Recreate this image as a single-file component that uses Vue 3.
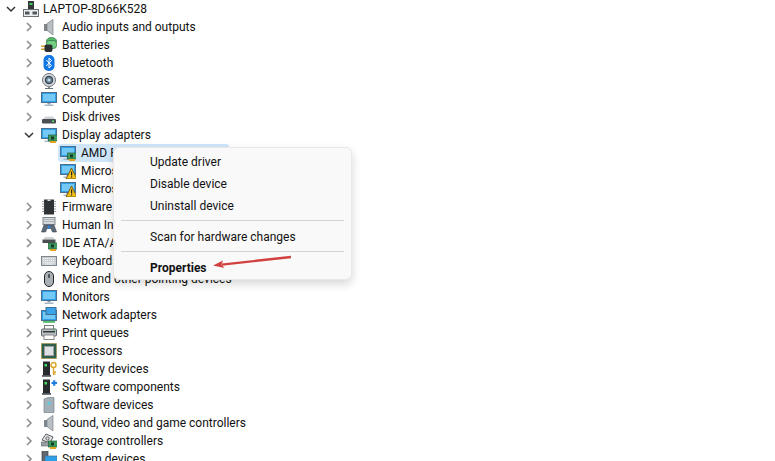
<script setup>
const screen = (x = 0, y = 0) => `<g transform="translate(${x} ${y})"><rect x="0.5" y="1.5" width="15" height="10" fill="#2f9fe8" stroke="#4a6f8f"/><rect x="2" y="3" width="12" height="7" fill="#74c8f6"/><rect x="6.5" y="12" width="3" height="1.5" fill="#8aa0b0"/><rect x="3.5" y="13.5" width="9" height="1.5" fill="#a9bac6"/></g>`
const card = `<rect x="7.5" y="8" width="9" height="6" fill="#3f9a5f" stroke="#1f5f3a" stroke-width=".7"/><rect x="10" y="9.5" width="3" height="3" fill="#143c28"/><rect x="9" y="14" width="6" height="2" fill="#e2a41f"/>`
const warn = `<path d="M11.5 5 L17 16 H6 Z" fill="#f5c21b" stroke="#6e4f08" stroke-width=".9" stroke-linejoin="round"/><rect x="11" y="8.5" width="1.2" height="4" fill="#222"/><rect x="11" y="13.3" width="1.2" height="1.2" fill="#222"/>`
const speaker = `<rect x="3" y="5" width="4" height="7" fill="#7f868a"/><path d="M6 4.5 L12 0.5 V16 L6 11.5 Z" fill="#b9bfc3" stroke="#7b8286" stroke-width=".7"/>`
const tower = `<rect x="2" y="0.5" width="7" height="14" fill="#272b2e"/><rect x="3.5" y="3" width="2.5" height="2.5" fill="#3fe060"/><rect x="1" y="14" width="9" height="1.8" fill="#55595c"/>`

const icons = {
  root: `<rect x="5" y="0" width="6" height="9" fill="#33383a"/><rect x="6.5" y="2" width="3" height="2" fill="#3fd060"/><rect x="0.5" y="8.5" width="15" height="7" fill="#eceff1" stroke="#6b7074"/><rect x="2" y="10.5" width="4.5" height="3" fill="#50565a"/><rect x="9.5" y="10.5" width="4.5" height="3" fill="#50565a"/>`,
  audio: speaker,
  batteries: `<ellipse cx="10.5" cy="4" rx="5" ry="3.5" fill="#55b96a" stroke="#2a6b3a" stroke-width=".7"/><rect x="5.5" y="3.5" width="10" height="8" rx="3" fill="#72cf84" stroke="#2a6b3a" stroke-width=".7"/><rect x="0" y="8.5" width="5" height="1.4" fill="#c89a20"/><rect x="0" y="11.5" width="5" height="1.4" fill="#c89a20"/><rect x="3.5" y="7.5" width="8" height="7.5" rx="2" fill="#2c2f31"/>`,
  bluetooth: `<rect x="2.5" y="0" width="11" height="16" rx="5" fill="#1177e6"/><path d="M5.3 5 L10.5 10.5 L8 13 V3 L10.5 5.5 L5.3 11" fill="none" stroke="#fff" stroke-width="1"/>`,
  cameras: `<circle cx="8" cy="7" r="6.5" fill="#d8dcdf" stroke="#6d7377"/><circle cx="8" cy="7" r="3.8" fill="#5f7f94" stroke="#2f363b"/><circle cx="8" cy="7" r="1.6" fill="#c5dbe9"/><rect x="7" y="13.5" width="2" height="1.5" fill="#8b9195"/><rect x="4" y="15" width="8" height="1" fill="#6b7074"/>`,
  computer: screen(),
  disk: `<path d="M2.5 10 L4 7.5 H12 L13.5 10 Z" fill="#cfd3d6"/><rect x="1" y="10" width="14" height="4.5" rx="1" fill="#4a4e52"/><rect x="11" y="11.5" width="2" height="1.5" fill="#58e070"/>`,
  display: screen() + card,
  displayWarn: screen() + warn,
  firmware: `<rect x="3" y="0.5" width="10" height="15" fill="#2f3336"/><path d="M1 2.5 H15 M1 5 H15 M1 7.5 H15 M1 10 H15 M1 12.5 H15" stroke="#9aa0a4" stroke-width="1" stroke-dasharray="2.2 9.8"/><rect x="6.5" y="0.5" width="3" height="1.5" fill="#d8dcdf"/>`,
  human: `<rect x="2" y="0.5" width="12" height="7" fill="#d5d8dc" stroke="#7f868c"/><path d="M3.5 2.5 H12.5 M3.5 4.5 H12.5" stroke="#8d949a" stroke-dasharray="1 1"/><path d="M0.5 15 L3 8 H13 L15.5 15 L11.5 15 L10 11.5 H6 L4.5 15 Z" fill="#5d6a78" stroke="#3c4550" stroke-width=".6"/><circle cx="8" cy="10" r="1.6" fill="#2f82d8"/>`,
  ide: `<path d="M2.5 4.5 L4 2 H12 L13.5 4.5 Z" fill="#cfd3d6"/><rect x="1.5" y="4.5" width="13" height="3.5" fill="#4a4e52"/>` + card,
  keyboard: `<rect x="0.5" y="3.5" width="15" height="9" fill="#c9ced2" stroke="#7e858a"/><path d="M2 5.5 H14 M2 7.5 H14 M2 9.5 H14" stroke="#f4f5f6" stroke-dasharray="1.2 .8"/><rect x="4" y="10.5" width="8" height="1" fill="#eef0f1"/>`,
  mice: `<rect x="3.5" y="0.5" width="9" height="15" rx="4.5" fill="#a8afb5" stroke="#24282b" stroke-width="1"/><rect x="7.2" y="3" width="1.6" height="4" rx=".8" fill="#343a3e"/>`,
  monitors: screen(),
  network: screen(0, 2) + `<rect x="5" y="0.5" width="10" height="7" fill="#39a4ea" stroke="#3d6e92"/><rect x="2" y="14" width="12" height="1.8" fill="#55c06a"/>`,
  print: `<rect x="3.5" y="0.5" width="9" height="4" fill="#fff" stroke="#777"/><rect x="0.5" y="4" width="15" height="7" rx="1" fill="#b9c0c4" stroke="#5f666b"/><rect x="2" y="6" width="12" height="1.5" fill="#33383b"/><rect x="3" y="10" width="10" height="4.5" fill="#fff" stroke="#888"/><rect x="12" y="4.5" width="2" height="1" fill="#3fd060"/>`,
  processors: `<rect x="0.5" y="0.5" width="15" height="15" fill="#2f5f4a" stroke="#b08a2e" stroke-dasharray="1 1"/><rect x="3.5" y="3.5" width="9" height="9" fill="#dfe2e4" stroke="#9ba1a5"/>`,
  security: tower + `<circle cx="12.5" cy="4" r="2.5" fill="none" stroke="#dba52a" stroke-width="1.4"/><path d="M12.5 6.5 V14 M12.5 11 H15 M12.5 13 H14.5" stroke="#dba52a" stroke-width="1.3"/>`,
  components: tower + `<path d="M10.5 4 H16 M13.2 1.2 V6.8" stroke="#1f7fe0" stroke-width="2.2"/>`,
  softdev: `<path d="M3 2 L7 0.5 H13 V15.5 H3 Z" fill="#a4afb8" stroke="#7a858e" stroke-width=".7"/><rect x="6.5" y="5" width="3" height="2.5" fill="#56d4e6"/>`,
  sound: speaker,
  storage: `<path d="M1 7 L5 1 L12 4 L9 10 Z" fill="#e7e9ea" stroke="#565b5f"/><circle cx="6.5" cy="5.5" r="1.6" fill="none" stroke="#565b5f"/><rect x="0.5" y="9" width="9" height="4" fill="#9a9fa3" stroke="#5c6165" stroke-width=".6"/>` + card,
  system: `<rect x="1" y="0.5" width="6" height="13" fill="#62686d" stroke="#3e4347" stroke-width=".7"/><rect x="4" y="5" width="12" height="9" fill="#2f9fe8" stroke="#4a6f8f" stroke-width=".7"/>`
}

const before = [
  ['Audio inputs and outputs', 'audio'], ['Batteries', 'batteries'], ['Bluetooth', 'bluetooth'],
  ['Cameras', 'cameras'], ['Computer', 'computer'], ['Disk drives', 'disk']
]
const adapters = [
  ['AMD Radeon(TM) Graphics', 'display', true], ['Microsoft Basic Display Adapter', 'displayWarn', false],
  ['Microsoft Hybrid Adapter', 'displayWarn', false]
]
const after = [
  ['Firmware', 'firmware'], ['Human Interface Devices', 'human'], ['IDE ATA/ATAPI controllers', 'ide'],
  ['Keyboards', 'keyboard'], ['Mice and other pointing devices', 'mice'], ['Monitors', 'monitors'],
  ['Network adapters', 'network'], ['Print queues', 'print'], ['Processors', 'processors'],
  ['Security devices', 'security'], ['Software components', 'components'], ['Software devices', 'softdev'],
  ['Sound, video and game controllers', 'sound'], ['Storage controllers', 'storage'], ['System devices', 'system']
]
</script>

<template>
  <div class="page">
    <div class="row root">
      <svg class="chev" viewBox="0 0 10 10"><path d="M1 3 L5 7 L9 3" class="dark" /></svg>
      <svg class="ico" viewBox="0 0 16 16" v-html="icons.root"></svg>
      <span>LAPTOP-8D66K528</span>
    </div>
    <div v-for="r in before" :key="r[0]" class="row child">
      <svg class="chev" viewBox="0 0 10 10"><path d="M3 1 L7 5 L3 9" class="grey" /></svg>
      <svg class="ico" viewBox="0 0 16 16" v-html="icons[r[1]]"></svg>
      <span>{{ r[0] }}</span>
    </div>
    <div class="row child">
      <svg class="chev" viewBox="0 0 10 10"><path d="M1 3 L5 7 L9 3" class="dark" /></svg>
      <svg class="ico" viewBox="0 0 16 16" v-html="icons.display"></svg>
      <span>Display adapters</span>
    </div>
    <div v-for="r in adapters" :key="r[0]" class="row leaf" :class="{ selected: r[2] }">
      <svg class="ico" viewBox="0 0 16 16" v-html="icons[r[1]]"></svg>
      <span>{{ r[0] }}</span>
    </div>
    <div v-for="r in after" :key="r[0]" class="row child">
      <svg class="chev" viewBox="0 0 10 10"><path d="M3 1 L7 5 L3 9" class="grey" /></svg>
      <svg class="ico" viewBox="0 0 16 16" v-html="icons[r[1]]"></svg>
      <span>{{ r[0] }}</span>
    </div>

    <div class="menu">
      <div class="item">Update driver</div>
      <div class="item">Disable device</div>
      <div class="item">Uninstall device</div>
      <div class="sep"></div>
      <div class="item">Scan for hardware changes</div>
      <div class="sep"></div>
      <div class="item bold">Properties</div>
    </div>

    <svg class="arrow" viewBox="0 0 85 20" width="85" height="20">
      <path d="M79 2 L10 9.6" fill="none" stroke="#d2413f" stroke-width="2.4" />
      <path d="M1 10.5 L11 5.5 L9.5 9.5 L12.5 13 Z" fill="#d2413f" />
    </svg>
  </div>
</template>

<style>
html, body { margin: 0; background: #fff; }
</style>

<style scoped>
.page {
  position: relative;
  width: 775px;
  height: 461px;
  overflow: hidden;
  background: #fff;
  font-family: Roboto, "Noto Sans", sans-serif;
  font-size: 12px;
  color: #111;
}
.row {
  display: flex;
  align-items: center;
  height: 18px;
  white-space: nowrap;
}
.row span { margin-bottom: 1px; }
.root { padding-left: 6px; }
.child { padding-left: 24px; }
.leaf { padding-left: 60px; }
.chev { width: 10px; height: 10px; flex: none; margin-right: 7px; }
.root .chev { margin-right: 7px; }
.chev path { fill: none; stroke-width: 1.5; }
.dark { stroke: #333; }
.grey { stroke: #8a8a8a; }
.ico { width: 16px; height: 16px; flex: none; margin-right: 5px; }
.root .ico { margin-right: 4px; }
.selected {
  background: #cfe6fa;
  width: 171px;
  margin-left: 58px;
  padding-left: 2px;
  border-radius: 3px;
  box-sizing: border-box;
}
.selected span {
  width: 32px;
  overflow: hidden;
}
.menu {
  position: absolute;
  left: 113px;
  top: 147px;
  width: 239px;
  height: 133px;
  box-sizing: border-box;
  padding-top: 2px;
  background: #f9f9f9;
  border: 1px solid #e8e8e8;
  border-radius: 6px;
  box-shadow: 0 4px 10px rgba(0, 0, 0, 0.16);
}
.item {
  box-sizing: border-box;
  height: 22px;
  line-height: 22px;
  padding-top: 1px;
  padding-left: 36px;
  color: #111;
}
.bold { font-weight: 700; }
.sep {
  height: 1px;
  margin: 4px 7px 4px;
  background: #d4d4d4;
}
.arrow {
  position: absolute;
  left: 212px;
  top: 255px;
}
</style>
